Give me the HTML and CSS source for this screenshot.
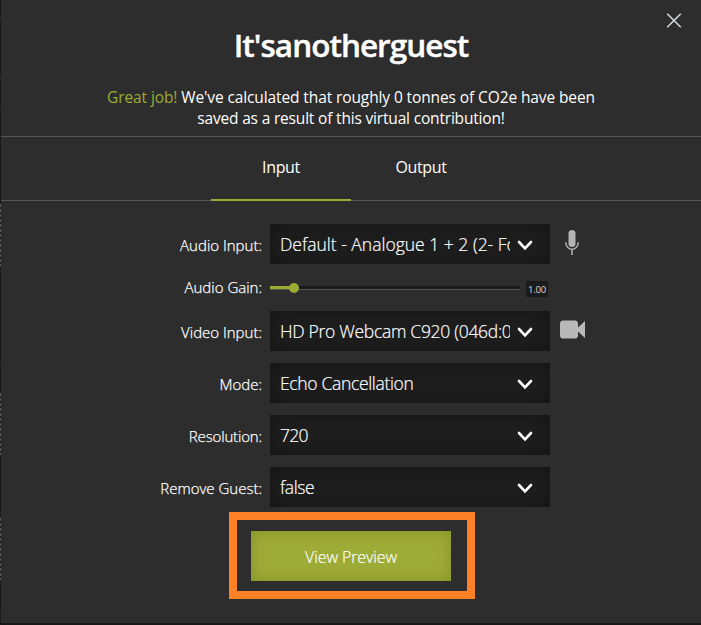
FILE: index.html
```html
<!DOCTYPE html>
<html>
	<head>
		<meta charset="utf-8">
		<title>Guest settings</title>
		<link rel="stylesheet" href="styles.css">
	</head>
	<body>
		<!-- background strip behind the modal -->
		<div class="strip">
			<i class="tick t1"></i><i class="tick t2"></i><i class="tick t3"></i><i class="tick t4"></i><i class="tick t5"></i>
			<i class="meter m1"></i><i class="meter m2"></i><i class="meter m3"></i>
		</div>

		<div class="modal">
			<button class="close">
				<svg width="16" height="16" viewBox="0 0 16 16"><path d="M1.2 .7L14.8 14.3M14.8 .7L1.2 14.3" fill="none" stroke="#cfd6da" stroke-width="1.6"/></svg>
			</button>

			<div class="header">
				<h1>It'sanotherguest</h1>
				<p class="line1"><span class="great">Great job!</span> We've calculated that roughly 0 tonnes of CO2e have been</p>
				<p class="line2">saved as a result of this virtual contribution!</p>
			</div>

			<div class="tabs">
				<div class="tab active">Input</div>
				<div class="tab">Output</div>
			</div>

			<div class="form">
				<div class="row">
					<label>Audio Input:</label>
					<div class="select">
						<span class="v-audio">Default - Analogue 1 + 2 (2- Fo</span>
						<svg class="arrow" width="16" height="11" viewBox="0 0 16 11"><path d="M2 2L8 8.3L14 2" /></svg>
					</div>
					<svg class="mic" width="14" height="26" viewBox="0 0 14 26"><rect x="3.5" y="0" width="7" height="17" rx="3.5" fill="#b3b3b3"/><path d="M.8 12.3C.8 21.6 13.2 21.6 13.2 12.3M7 19V25" fill="none" stroke="#b3b3b3" stroke-width="1.5"/></svg>
				</div>

				<div class="row gain">
					<label>Audio Gain:</label>
					<div class="slider"><div class="fill"></div><div class="thumb"></div></div>
					<span class="value">1.00</span>
				</div>

				<div class="row">
					<label>Video Input:</label>
					<div class="select">
						<span class="v-video">HD Pro Webcam C920 (046d:0</span>
						<svg class="arrow" width="16" height="11" viewBox="0 0 16 11"><path d="M2 2L8 8.3L14 2" /></svg>
					</div>
					<svg class="cam" width="26" height="19" viewBox="0 0 26 19"><rect x="0" y="0.4" width="18" height="18.2" rx="3.4" fill="#b9b9b9"/><path d="M17.5 8L25 1V18L17.5 11Z" fill="#b9b9b9"/></svg>
				</div>

				<div class="row">
					<label>Mode:</label>
					<div class="select">
						<span class="v-mode">Echo Cancellation</span>
						<svg class="arrow" width="16" height="11" viewBox="0 0 16 11"><path d="M2 2L8 8.3L14 2" /></svg>
					</div>
				</div>

				<div class="row">
					<label class="l-res">Resolution:</label>
					<div class="select">
						<span class="v-res">720</span>
						<svg class="arrow" width="16" height="11" viewBox="0 0 16 11"><path d="M2 2L8 8.3L14 2" /></svg>
					</div>
				</div>

				<div class="row">
					<label>Remove Guest:</label>
					<div class="select">
						<span class="v-remove">false</span>
						<svg class="arrow" width="16" height="11" viewBox="0 0 16 11"><path d="M2 2L8 8.3L14 2" /></svg>
					</div>
				</div>
			</div>

			<div class="highlight">
				<button class="preview">View Preview</button>
			</div>
		</div>
	</body>
</html>
```
FILE: styles.css
```css
* {
	margin: 0;
	padding: 0;
	box-sizing: border-box;
}
body {
	display: flex;
	width: 701px;
	height: 625px;
	overflow: hidden;
	background-color: #171717;
	color: #fff;
	font-family: "Open Sans", "Noto Sans", sans-serif;
}
button {
	border: none;
	background: none;
	font-family: inherit;
}
.strip {
	position: relative;
	width: 1px;
	height: 625px;
	background-color: #191919;
}
.tick {
	position: absolute;
	left: 0;
	width: 1px;
	height: 1px;
	background-color: #444;
}
.t1 { top: 17px; }
.t2 { top: 78px; }
.t3 { top: 110px; background-color: #333; }
.t4 { top: 360px; background-color: #333; }
.t5 { top: 611px; background-color: #333; }
.meter {
	position: absolute;
	left: 0;
	width: 1px;
	height: 62px;
	background: repeating-linear-gradient(#5a5a5a 0 3px, #191919 3px 5px);
}
.m1 { top: 204px; }
.m2 { top: 393px; }
.m3 { top: 518px; }

.modal {
	position: relative;
	width: 700px;
	height: 623px;
	background-color: #2d2d2d;
}
.close {
	position: absolute;
	top: 13px;
	right: 19px;
	width: 16px;
	height: 16px;
}
.close svg {
	display: block;
}
.header {
	height: 137px;
	padding-top: 23px;
	border-bottom: 1px solid #565656;
	text-align: center;
}
h1 {
	height: 64px;
	line-height: 44px;
	font-size: 31.5px;
	font-weight: 600;
	letter-spacing: -0.98px;
	-webkit-text-stroke: 0.4px #fff;
}
.header p {
	line-height: 21px;
	font-size: 15.5px;
	white-space: nowrap;
}
.header .line1 {
	letter-spacing: -0.11px;
}
.header .line2 {
	letter-spacing: -0.18px;
}
.great {
	color: #9dab35;
}
.tabs {
	display: flex;
	justify-content: center;
	height: 64px;
	border-bottom: 1px solid #565656;
}
.tab {
	width: 140px;
	height: 64px;
	line-height: 60px;
	font-size: 16px;
	letter-spacing: -0.35px;
	text-align: center;
}
.active {
	border-bottom: 2px solid #9dab35;
}

.form {
	display: flex;
	flex-direction: column;
	gap: 12px;
	padding: 23px 0 0 119px;
}
.row {
	display: flex;
	align-items: center;
	height: 40px;
}
label {
	width: 142px;
	margin-right: 8px;
	padding-top: 2px;
	font-size: 15px;
	font-weight: 300;
	text-align: right;
	white-space: nowrap;
	-webkit-text-stroke: 0.25px #fff;
}
.l-res {
	letter-spacing: -0.15px;
}
.select {
	display: flex;
	align-items: center;
	width: 280px;
	height: 40px;
	padding-left: 10px;
	background-color: #1e1e1e;
	box-shadow: inset 0 0 18px #141414;
	font-size: 17.5px;
	font-weight: 300;
	-webkit-text-stroke: 0.2px #fff;
}
.select span {
	width: 230px;
	overflow: hidden;
	white-space: nowrap;
}
.v-audio { letter-spacing: 0; }
.v-video { letter-spacing: -0.3px; }
.v-mode { letter-spacing: -0.33px; }
.v-res { letter-spacing: -0.7px; }
.v-remove { letter-spacing: -0.4px; }
.arrow {
	margin: 2px 0 0 7px;
}
.arrow path {
	fill: none;
	stroke: #fff;
	stroke-width: 2.6;
	stroke-linecap: round;
}
.mic {
	margin: -3px 0 0 15px;
}
.cam {
	margin: -3px 0 0 10px;
}
.gain {
	height: 23px;
}
.gain label {
	padding-top: 0;
	padding-bottom: 1px;
}
.slider {
	display: flex;
	align-items: center;
	width: 250px;
	height: 4px;
	margin-top: 1px;
	background-color: #1b1b1b;
	border-bottom: 1px solid #555;
}
.fill {
	width: 20px;
	height: 3px;
	background-color: #9dab35;
}
.thumb {
	width: 10px;
	height: 10px;
	margin-left: -1px;
	border-radius: 50%;
	background-color: #9dab35;
}
.value {
	width: 22px;
	height: 16px;
	margin: 3px 0 0 6px;
	background-color: #1b1b1b;
	line-height: 17px;
	font-size: 9.5px;
	letter-spacing: -0.2px;
	text-align: center;
	color: #ddd;
}
.highlight {
	width: 246px;
	height: 87px;
	margin: 5px 0 0 228px;
	padding: 11px 14px;
	border: 8px solid #ff8127;
}
.preview {
	display: block;
	width: 200px;
	height: 50px;
	padding-top: 2px;
	background-color: #9dab37;
	box-shadow: inset 0 0 14px #85912b;
	color: #fff;
	font-size: 16px;
	font-weight: 300;
	letter-spacing: -0.1px;
	-webkit-text-stroke: 0.2px #fff;
}
```
